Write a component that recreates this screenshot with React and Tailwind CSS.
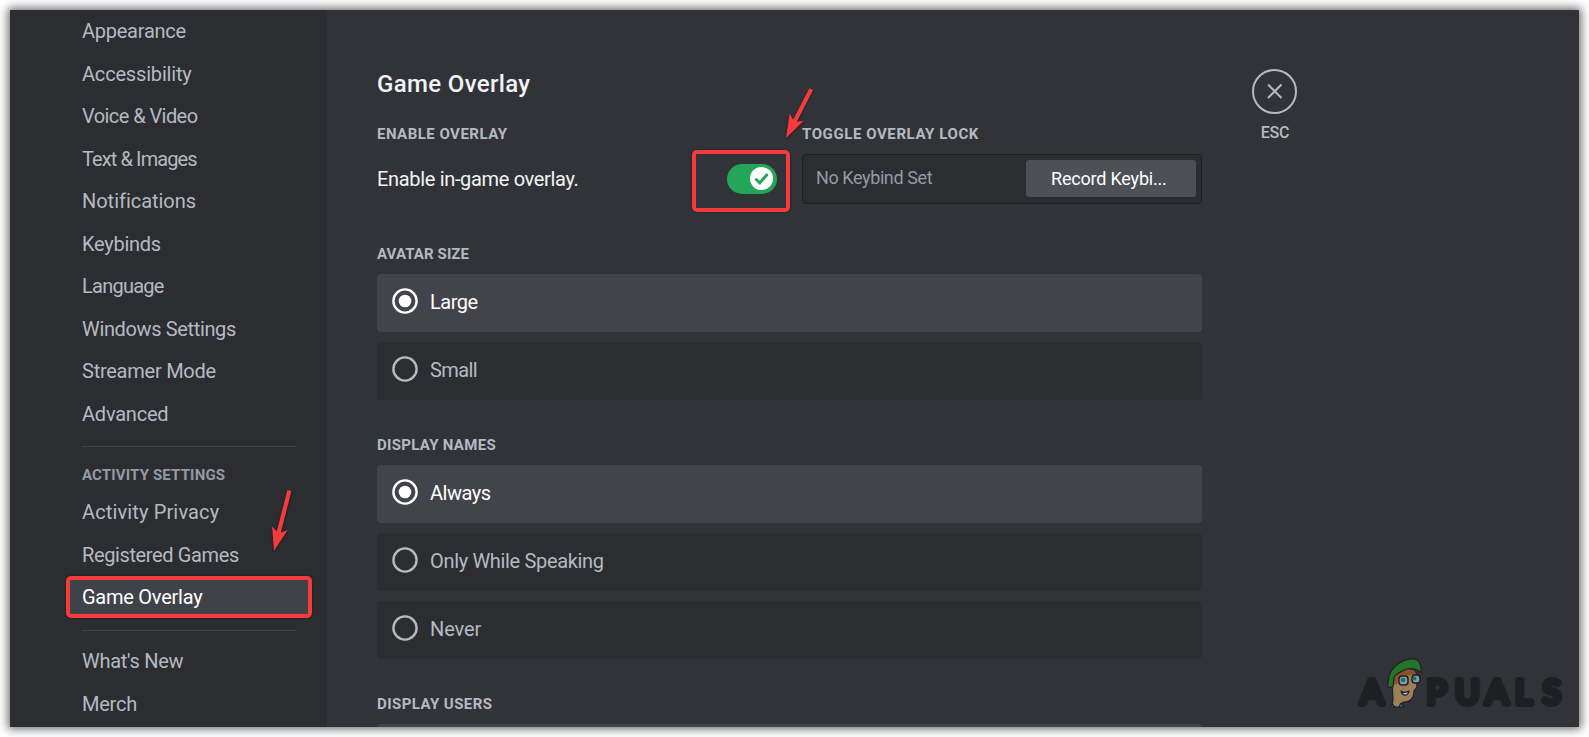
import { clsx } from 'clsx';

const settings = [
    { label: 'Appearance', tracking: 'tracking-[-0.25px]' },
    { label: 'Accessibility', tracking: 'tracking-[-0.18px]' },
    { label: 'Voice & Video', tracking: 'tracking-[-0.57px]' },
    { label: 'Text & Images', tracking: 'tracking-[-0.9px]' },
    { label: 'Notifications', tracking: 'tracking-[-0.03px]' },
    { label: 'Keybinds', tracking: 'tracking-[-0.26px]' },
    { label: 'Language', tracking: 'tracking-[-0.76px]' },
    { label: 'Windows Settings', tracking: 'tracking-[-0.36px]' },
    { label: 'Streamer Mode', tracking: 'tracking-[-0.25px]' },
    { label: 'Advanced', tracking: 'tracking-[-0.22px]' },
];

const activity = [
    { label: 'Activity Privacy', tracking: 'tracking-[0.14px]' },
    { label: 'Registered Games', tracking: 'tracking-[-0.38px]' },
    { label: 'Game Overlay', tracking: 'tracking-[-0.25px]', active: true },
];

const more = [
    { label: "What's New", tracking: 'tracking-[-0.28px]' },
    { label: 'Merch', tracking: 'tracking-[-0.25px]' },
];

const NavList = ({ items }) => (
    <ul className="flex flex-col gap-[2.5px]">
        {items.map(item => (
            <li key={item.label} className={clsx('relative flex h-10 items-center rounded-[5px] pl-3 text-xl', item.tracking, item.active ? 'bg-[#404249] text-white' : 'text-[#b5bac1]')}>
                {item.label}
                {item.active && <span className="absolute -inset-x-1 -top-px -bottom-px rounded-[5px] border-4 border-[#f53b3b] shadow-[0_0_2px_#0009]" />}
            </li>
        ))}
    </ul>
);

const Divider = ({ className }) => <div className={clsx('mr-[11px] ml-3 h-px bg-[#3f4147]', className)} />;

const Heading = ({ children, className }) => (
    <h2 className={clsx('text-[15px] leading-5 font-bold text-[#b5bac1] uppercase', className)}>{children}</h2>
);

const Radio = ({ label, checked, className }) => (
    <div className={clsx('flex h-[58px] items-center gap-3 rounded-[4px] pl-[15px] text-xl', checked ? 'bg-[#43444b] text-white' : 'bg-[#2b2d31] text-[#b5bac1]')}>
        <svg className="mb-1 size-[26px]" viewBox="0 0 26 26" fill="none">
            <circle cx="13" cy="13" r="11.6" stroke="currentColor" strokeWidth="2.4" />
            {checked && <circle cx="13" cy="13" r="6.3" fill="currentColor" />}
        </svg>
        <span className={clsx('mb-0.5', className)}>{label}</span>
    </div>
);

const Arrow = ({ className, angle, length }) => (
    <svg className={clsx('absolute overflow-visible drop-shadow-[0_1px_1px_#0008]', className)} width="20" height="60" viewBox="-10 -60 20 60">
        <path transform={`rotate(${angle})`} d={`M0 0 L-8 -23.5 L-2.1 -19.5 V${-length} H2.1 V-19.5 L8 -23.5 Z`} fill="#f53b3b" />
    </svg>
);

const Watermark = () => (
    <svg className="absolute right-[13px] bottom-4" width="210" height="56" viewBox="1355 655 210 56">
        <g fill="#1e1f23" stroke="#1e1f23" strokeWidth="6" strokeLinejoin="round" fontFamily="Lato, sans-serif" fontWeight="400" fontSize="33.5">
            <text x="1359.5" y="704">A</text>
            <text x="1425.5 1454 1484.5 1514 1541.5" y="704">PUALS</text>
        </g>
        {/* Mascot */}
        <g stroke="#1f2023" strokeWidth="1.2" strokeLinejoin="round">
            <path d="M1391 682 L1392 699 L1391 707 H1401 L1402 702 C1409 703 1413 698 1413 691 L1416 687 L1415 672 L1406 669 L1393 676 Z" fill="#9c7f5a" />
            <path d="M1393 677 L1406 668 L1414 671 L1414 675 L1400 676 L1396 684 L1392 685 Z" fill="#8a4f2b" stroke="none" />
            <path d="M1386.5 687 L1388 676 C1391 667 1401 658 1413 659 C1419 660 1421 667 1420 672 C1415 669 1411 668 1406 669 C1400 671 1396 673 1393 677 L1392 687 Z" fill="#23742a" />
            <path d="M1389 707 L1391 704 L1394 707 Z M1398 707 L1400 703 L1403 707 Z" fill="#1f8396" />
            <path d="M1400 691 C1403 694 1406 692 1408 691 C1407 696 1402 697 1400 691 Z" fill="#b9bec2" />
            <rect x="1398" y="676" width="9" height="9" rx="3" fill="#8f979c" strokeWidth="1.5" />
            <rect x="1411" y="675" width="8" height="8" rx="3" fill="#8f979c" strokeWidth="1.5" />
        </g>
        <circle cx="1402" cy="680" r="2.3" fill="#1a6f86" />
        <circle cx="1413.5" cy="678.5" r="2" fill="#1a6f86" />
    </svg>
);

const App = () => (
    <div className="h-[737px] overflow-hidden bg-white p-2.5 font-[Roboto,sans-serif]">
        <div className="relative flex h-[717px] w-[1569px] shadow-[0_0_9px_2px_#0009]">
            <div className="flex h-full w-full overflow-hidden bg-[#313338]">
                {/* Sidebar */}
                <nav className="w-[317px] shrink-0 bg-[#2b2d31] pt-px pr-[19px] pl-[60px]">
                    <NavList items={settings} />
                    <Divider className="mt-3" />
                    <h3 className="mt-[18.5px] mb-[7px] ml-3 text-[15px] leading-5 font-bold tracking-[0.15px] text-[#949ba4]">ACTIVITY SETTINGS</h3>
                    <NavList items={activity} />
                    <Divider className="mt-[13px] mb-2.5" />
                    <NavList items={more} />
                </nav>

                {/* Content */}
                <main className="ml-[50px] w-[825px] shrink-0 pt-[59px]">
                    <h1 className="text-2xl leading-[30px] font-medium tracking-[0.35px] text-[#f2f3f5]">Game Overlay</h1>
                    <div className="mt-[25px] flex">
                        <div className="w-[425px]">
                            <Heading className="tracking-[0.48px]">Enable Overlay</Heading>
                            <div className="mt-5 flex h-[30px] items-center justify-between pr-[25px]">
                                <span className="text-xl tracking-[-0.33px] text-[#f2f3f5]">Enable in-game overlay.</span>
                                <div className="flex h-[30px] w-[50px] items-center justify-end rounded-full bg-[#23a55a] pr-1">
                                    <svg className="mb-0.5 size-[23px]" viewBox="0 0 23 23" fill="none">
                                        <circle cx="11.5" cy="11.5" r="11.5" fill="#fff" />
                                        <path d="M5.5 11.8 L9.8 16 L17.5 7" stroke="#23a55a" strokeWidth="2.9" />
                                    </svg>
                                </div>
                            </div>
                        </div>
                        <div className="w-[400px]">
                            <Heading className="tracking-[0.58px]">Toggle Overlay Lock</Heading>
                            <div className="mt-2.5 flex h-[50px] items-center justify-between rounded-[4px] border border-[#1e1f22] bg-[#2b2d31] pr-[5px] pl-[13px]">
                                <span className="mb-0.5 text-lg tracking-[-0.4px] text-[#949ba4]">No Keybind Set</span>
                                <button className="mb-px h-[37px] w-[170px] rounded-[3px] bg-[#4e5058] pl-[25px] text-left text-lg tracking-[-0.2px] text-white">Record Keybi...</button>
                            </div>
                        </div>
                    </div>

                    <Heading className="mt-10 tracking-[0.1px]">Avatar Size</Heading>
                    <div className="mt-2.5 flex flex-col gap-2.5">
                        <Radio label="Large" className="tracking-[-0.5px]" checked />
                        <Radio label="Small" className="tracking-[-0.6px]" />
                    </div>

                    <Heading className="mt-[35px] tracking-[0.3px]">Display Names</Heading>
                    <div className="mt-2.5 flex flex-col gap-2.5">
                        <Radio label="Always" className="tracking-[-0.5px]" checked />
                        <Radio label="Only While Speaking" className="tracking-[-0.33px]" />
                        <Radio label="Never" className="tracking-[-0.1px]" />
                    </div>

                    <Heading className="mt-[35px] tracking-[0.43px]">Display Users</Heading>
                    <div className="mt-2.5 h-[58px] rounded-[4px] bg-[#43444b]" />
                </main>

                {/* Close */}
                <div className="ml-[50px] flex flex-col items-center self-start pt-[59px] text-[#b5bac1]">
                    <svg width="45" height="45" viewBox="0 0 45 45" fill="none" stroke="currentColor">
                        <circle cx="22.5" cy="22.5" r="21.5" strokeWidth="2" />
                        <path d="M16 15.5 L29.5 29 M29.5 15.5 L16 29" strokeWidth="2" />
                    </svg>
                    <span className="mt-[9px] ml-px text-base leading-5 font-medium tracking-[-0.3px]">ESC</span>
                </div>
            </div>

            {/* Annotations */}
            <div className="absolute top-[140px] left-[682px] h-[62px] w-[98px] rounded-[5px] border-4 border-[#f53b3b] shadow-[0_0_2px_#0009]" />
            <Arrow className="top-[68px] left-[766px]" angle={27.3} length={55} />
            <Arrow className="top-[481px] left-[254px]" angle={14.3} length={62.5} />
            <Watermark />
        </div>
    </div>
);

export default App;
